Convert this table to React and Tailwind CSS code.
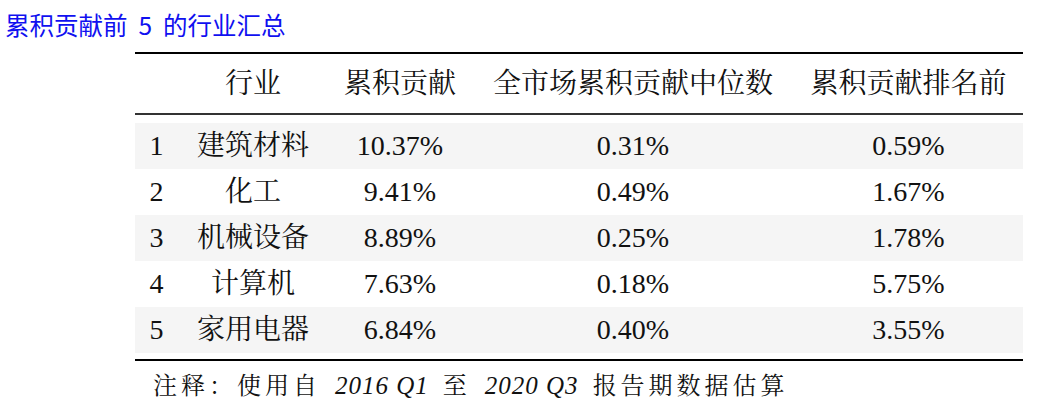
const rows = [
  { rank: "1", industry: "建筑材料", total: "10.37%", median: "0.31%", top: "0.59%" },
  { rank: "2", industry: "化工", total: "9.41%", median: "0.49%", top: "1.67%" },
  { rank: "3", industry: "机械设备", total: "8.89%", median: "0.25%", top: "1.78%" },
  { rank: "4", industry: "计算机", total: "7.63%", median: "0.18%", top: "5.75%" },
  { rank: "5", industry: "家用电器", total: "6.84%", median: "0.40%", top: "3.55%" },
];

const serif = "font-['Liberation_Serif','Noto_Serif_CJK_SC','Noto_Sans_CJK_SC',serif]";
const cols = "grid grid-cols-[43px_150px_144px_322px_229px] items-center";

const App = () => {
  return (
    <div className="w-[1060px] h-[412px] bg-white text-black overflow-hidden">
      <h1 className="pt-[10px] pl-[5px] h-[38px] leading-[29px] text-[24.5px] text-[#1010f0] font-['Noto_Sans_CJK_SC','Noto_Sans',sans-serif]">
        累积贡献前<span className="mx-[11px]">5</span>的行业汇总
      </h1>

      <div className={`ml-[135px] mt-[14px] w-[888px] ${serif}`}>
        <div className="h-[2px] bg-black" />
        <div className={`${cols} h-[59px] text-[28px] text-[#111]`}>
          <div />
          <div className="text-center">行业</div>
          <div className="text-center">累积贡献</div>
          <div className="text-center">全市场累积贡献中位数</div>
          <div className="text-center">累积贡献排名前</div>
        </div>
        <div className="h-[2px] bg-[#333]" />

        <div className="pt-[8px] pb-[6px]">
          {rows.map((r, i) => (
            <div
              key={r.rank}
              className={`${cols} h-[46px] text-[28px] text-[#111] ${i % 2 === 0 ? "bg-[#f5f5f5]" : "bg-white"}`}
            >
              <div className="text-center">{r.rank}</div>
              <div className="text-center">{r.industry}</div>
              <div className="text-center">{r.total}</div>
              <div className="text-center">{r.median}</div>
              <div className="text-center">{r.top}</div>
            </div>
          ))}
        </div>
        <div className="h-[2px] bg-black" />

        <p className="pl-[18px] pt-[9px] text-[24px] leading-[32px] tracking-[4px] text-[#111]">
          注释：使用自
          <i className="mx-[14px] text-[25px] tracking-[1px]">2016 Q1</i>至
          <i className="mx-[14px] text-[25px] tracking-[1px]">2020 Q3</i>报告期数据估算
        </p>
      </div>
    </div>
  );
};

export default App;
